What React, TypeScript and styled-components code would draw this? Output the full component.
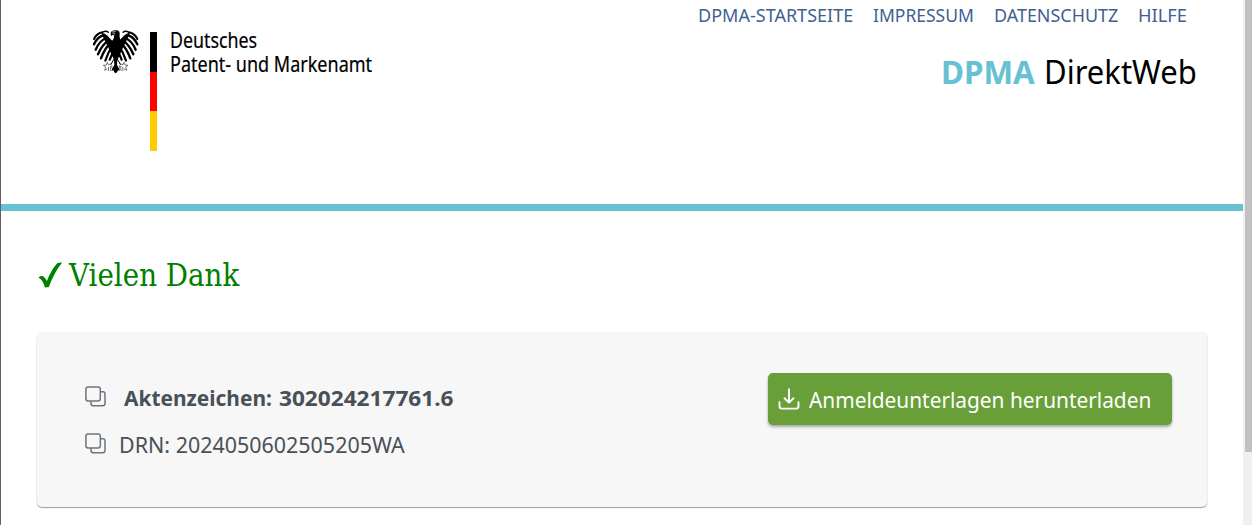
import React from "react";
import styled, { createGlobalStyle } from "styled-components";

const GlobalStyle = createGlobalStyle`
  * { box-sizing: border-box; }
  html, body { margin: 0; padding: 0; overflow: hidden; background: #fff; }
  body { font-family: "Noto Sans", "Open Sans", sans-serif; }
`;

const Window = styled.div`
  display: flex;
  width: 1252px;
  height: 525px;
  border-left: 1px solid #6b5c63;
  background: #fff;
`;

const Page = styled.div`
  flex: 1;
  min-width: 0;
`;

const Track = styled.div`
  width: 9px;
  padding-left: 2px;
  background: #f0f0f0;
`;

const Thumb = styled.div`
  height: 452px;
  background: #c1c1c1;
`;

const Header = styled.header`
  display: flex;
  justify-content: space-between;
  height: 211px;
  border-bottom: 7px solid #66c1d2;
`;

const Brand = styled.div`
  display: flex;
  align-items: flex-start;
  padding: 29px 0 0 91px;
`;

const Flag = styled.div`
  width: 7px;
  height: 119px;
  margin: 3px 13px 0 11px;
  background: linear-gradient(#000 0 33.3%, #f00 33.3% 66.4%, #fc0 66.4%);
`;

const Fitted = styled.span<{ $scale: number }>`
  display: block;
  width: max-content;
  white-space: nowrap;
  transform: scaleX(${(p) => p.$scale});
  transform-origin: 0 50%;
`;

const BrandName = styled.div`
  font-size: 21px;
  line-height: 23.5px;
  color: #000;
  -webkit-text-stroke: 0.2px #000;
`;

const HeaderRight = styled.div`
  width: 545px;
`;

const Nav = styled.nav`
  display: flex;
  height: 31px;
  color: #3f6190;
`;

const NavLink = styled.a<{ $width: number }>`
  width: ${(p) => p.$width}px;
  font-size: 17.5px;
  line-height: 31px;
`;

const Product = styled.div`
  display: flex;
  padding: 17px 0 0 243px;
  font-size: 33px;
  line-height: 48px;
  color: #000;
`;

const ProductOwner = styled.div`
  width: 103px;
  font-weight: 700;
  color: #66c1d2;
`;

const Title = styled.h1`
  display: flex;
  align-items: center;
  height: 48px;
  margin: 40px 0 0 37px;
  font: 400 31px/48px "DejaVu Serif", serif;
  color: #008000;

  svg { margin-right: 6px; }
`;

const Card = styled.section`
  display: flex;
  justify-content: space-between;
  width: 1170px;
  height: 174px;
  margin: 34px 0 0 36px;
  padding: 40px 35px 0 48px;
  border-radius: 5px;
  background: #f7f7f7;
  box-shadow: 0 1px 1px rgba(0, 0, 0, 0.36), 0 0 2px rgba(0, 0, 0, 0.14);
`;

const Row = styled.div<{ $strong?: boolean }>`
  display: flex;
  align-items: center;
  height: 47px;
  gap: ${(p) => (p.$strong ? 18 : 13)}px;
  font-size: 22px;
  font-weight: ${(p) => (p.$strong ? 700 : 400)};
  color: #495057;

  svg { margin-top: -1px; }
`;

const Entry = styled.div`
  display: flex;
`;

const Label = styled.div<{ $width: number }>`
  width: ${(p) => p.$width}px;
`;

const Button = styled.button`
  display: flex;
  align-items: center;
  width: 404px;
  height: 52px;
  padding: 0 0 0 10px;
  gap: 9px;
  border: 0;
  border-radius: 5px;
  background: #689f38;
  box-shadow: 0 2px 3px rgba(0, 0, 0, 0.32);
  color: #fff;
  font: 400 22px/52px "Noto Sans", sans-serif;
`;

const Wing = () => (
  <g fill="none" stroke="#000" strokeLinecap="round" strokeLinejoin="round">
    <path d="M32 15 L50 25 L64 40 L76 42 L76 100 L66 88 L54 62 L42 38 Z" fill="#000" stroke="none" />
    <path d="M38 15 Q47 10 54 16" strokeWidth="4" />
    <path d="M36 16 Q18 20 11 36" strokeWidth="6" />
    <path d="M42 24 Q22 28 11 52" strokeWidth="7" />
    <path d="M48 33 Q28 40 16 68" strokeWidth="7" />
    <path d="M56 40 Q36 52 23 82" strokeWidth="7" />
    <path d="M61 48 Q44 62 32 94" strokeWidth="7" />
    <path d="M67 56 Q54 74 45 101" strokeWidth="6.5" />
    <path d="M72 62 Q66 82 58 98" strokeWidth="6.5" />
  </g>
);

const Leg = () => (
  <g fill="none" stroke="#000" strokeLinecap="round">
    <path d="M71 96 L62 112" strokeWidth="3" />
    <path d="M64 110 L54 113 L51 106 L48 114 L39 115 L46 120 L43 130 L50 126 M55 120 L54 131 M61 118 L60 131 M64 116 L66 126" strokeWidth="1.6" />
  </g>
);

const Eagle = () => (
  <svg width="47" height="45" viewBox="5 6 141 135" aria-label="Bundesadler">
    <Wing />
    <g transform="translate(152 0) scale(-1 1)"><Wing /></g>
    <Leg />
    <g transform="translate(152 0) scale(-1 1)"><Leg /></g>
    <path d="M64 13 Q70 8 80 10 Q89 12 88 22 Q86 31 91 41 Q97 54 91 73 Q88 90 81 98 L80 113 L89 131 L83 130 L80 136 L76 139 L72 136 L69 130 L63 131 L72 113 L71 98 Q63 80 60 61 Q60 49 67 41 Q72 33 71 25 L66 24 L62 28 L61 20 Q61 16 64 13 Z" />
    <path d="M65 15 L76 14 M67 20 L74 21" stroke="#fff" strokeWidth="2.2" />
  </svg>
);

const Check = () => (
  <svg width="25" height="27" viewBox="0 0 25 27">
    <path d="M0.4 15.4 Q3 13.4 5 14.2 Q7.2 15.4 8.9 19 Q13 8 19.5 1 L24.2 0.6 Q16.5 10 10.8 25 L7 25.4 Q4.8 17.5 0.4 15.4 Z" fill="#008000" />
  </svg>
);

const CopyIcon = () => (
  <svg width="21" height="21" viewBox="0 0 21 21" fill="none" stroke="#6c757d" strokeWidth="1.5">
    <rect x="0.9" y="0.9" width="14.4" height="14" rx="2.2" />
    <path d="M15.4 5.7 H17.8 Q20 5.7 20 7.9 V17.6 Q20 19.8 17.8 19.8 H8.2 Q6 19.8 6 17.6 V15" />
  </svg>
);

const DownloadIcon = () => (
  <svg width="22" height="22" viewBox="0 0 22 22" fill="none" stroke="#fff" strokeWidth="1.9" strokeLinecap="round" strokeLinejoin="round">
    <path d="M11 1.2 V14.4 M6.5 10.2 L11 14.6 L15.5 10.2" />
    <path d="M1.5 14.2 V18.3 Q1.5 20.6 3.8 20.6 H18.2 Q20.5 20.6 20.5 18.3 V14.2" />
  </svg>
);

const links = [
  { label: "DPMA-STARTSEITE", width: 175, scale: 1.03 },
  { label: "IMPRESSUM", width: 121, scale: 1.0 },
  { label: "DATENSCHUTZ", width: 144, scale: 1.024 },
  { label: "HILFE", width: 60, scale: 1.045 },
];

export default function App() {
  return (
    <>
      <GlobalStyle />
      <Window>
        <Page>
          <Header>
            <Brand>
              <Eagle />
              <Flag />
              <BrandName>
                <Fitted $scale={0.848}>Deutsches</Fitted>
                <Fitted $scale={0.858}>Patent- und Markenamt</Fitted>
              </BrandName>
            </Brand>
            <HeaderRight>
              <Nav>
                {links.map((l) => (
                  <NavLink key={l.label} $width={l.width}>
                    <Fitted $scale={l.scale}>{l.label}</Fitted>
                  </NavLink>
                ))}
              </Nav>
              <Product>
                <ProductOwner><Fitted $scale={0.95}>DPMA</Fitted></ProductOwner>
                <Fitted $scale={0.94}>DirektWeb</Fitted>
              </Product>
            </HeaderRight>
          </Header>
          <Title><Check /><Fitted $scale={0.895}>Vielen Dank</Fitted></Title>
          <Card>
            <div>
              <Row $strong>
                <CopyIcon />
                <Entry>
                  <Label $width={155}><Fitted $scale={0.95}>Aktenzeichen:</Fitted></Label>
                  <Fitted $scale={1.028}>302024217761.6</Fitted>
                </Entry>
              </Row>
              <Row>
                <CopyIcon />
                <Fitted $scale={0.975}>DRN: 2024050602505205WA</Fitted>
              </Row>
            </div>
            <Button><DownloadIcon /><Fitted $scale={0.947}>Anmeldeunterlagen herunterladen</Fitted></Button>
          </Card>
        </Page>
        <Track><Thumb /></Track>
      </Window>
    </>
  );
}
